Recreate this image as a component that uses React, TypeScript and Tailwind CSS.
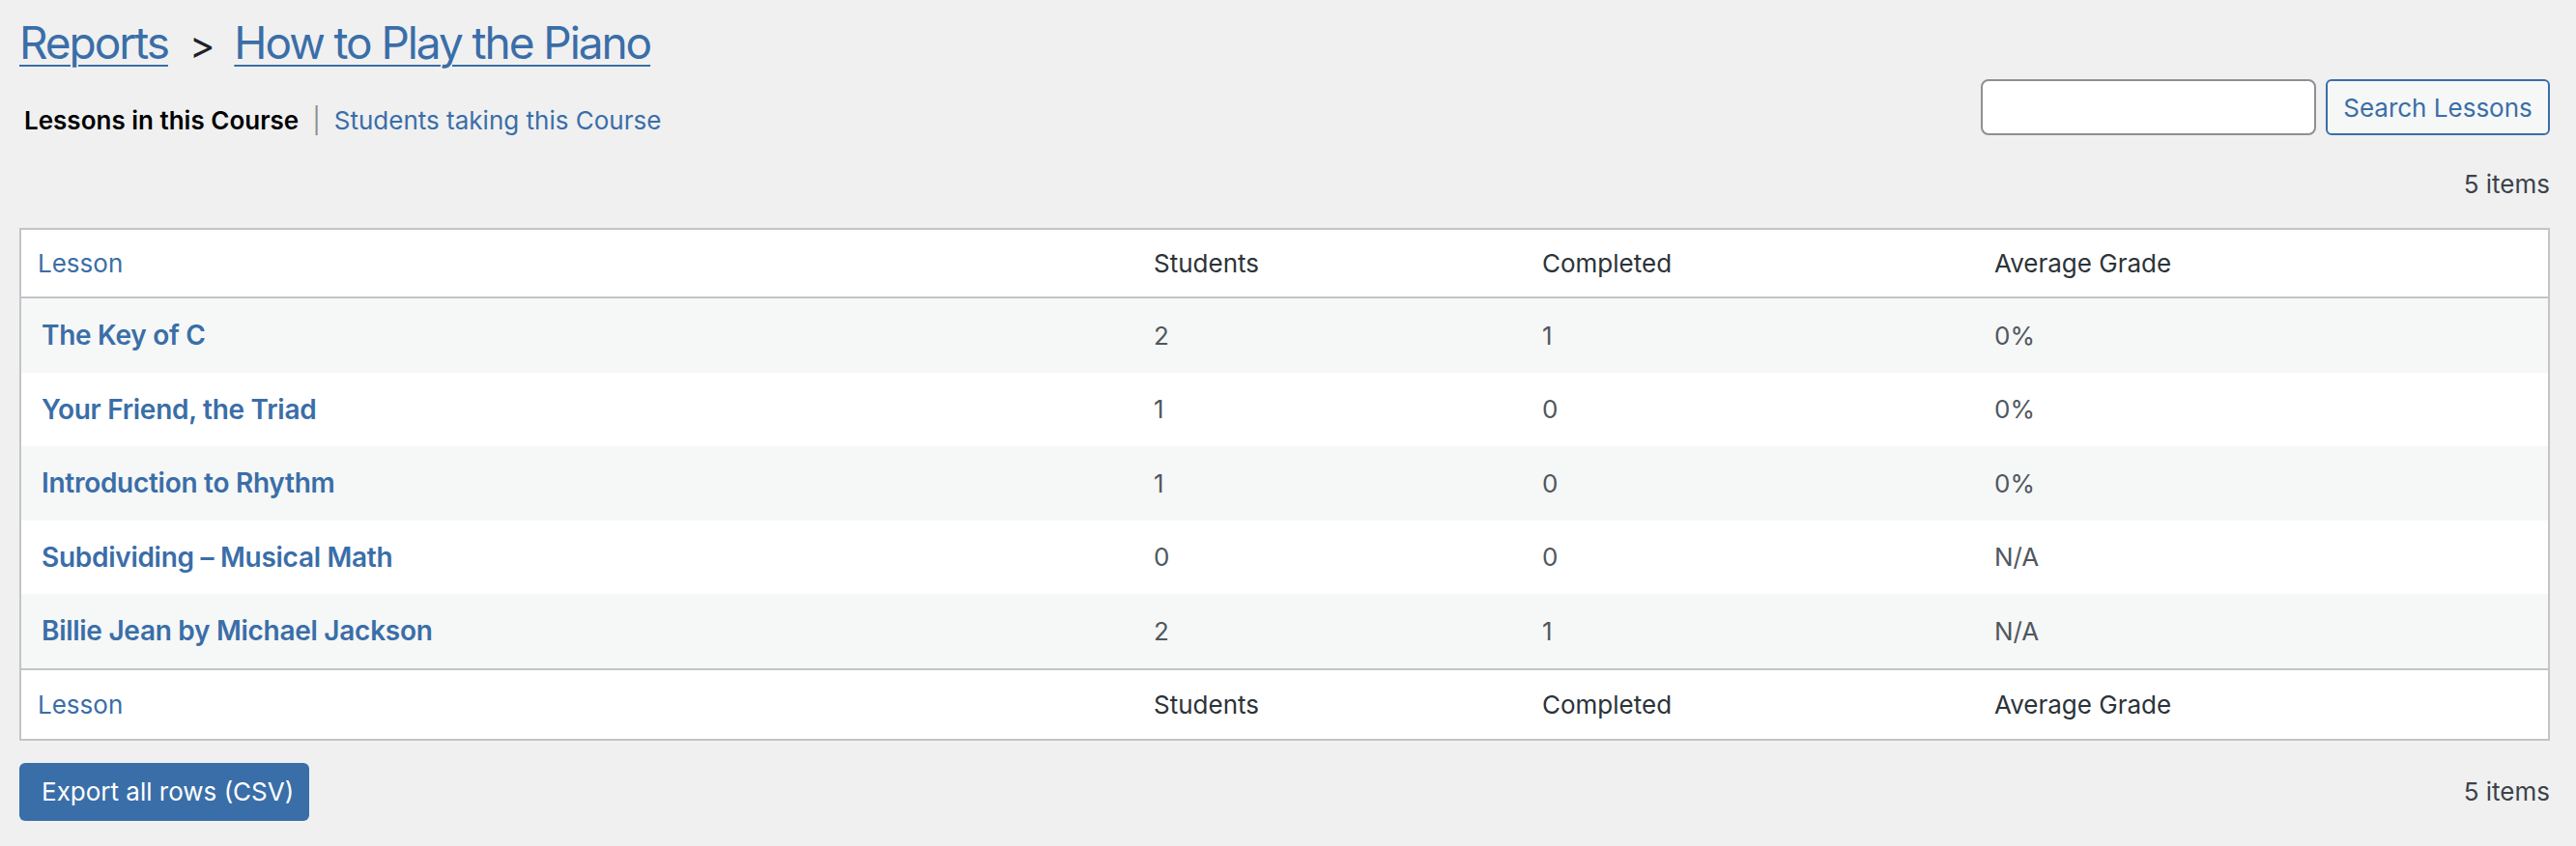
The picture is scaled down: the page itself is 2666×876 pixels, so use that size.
import React from "react";

interface LessonRow {
    title: string;
    students: number;
    completed: number;
    grade: string;
}

const lessons: LessonRow[] = [
    { title: "The Key of C", students: 2, completed: 1, grade: "0%" },
    { title: "Your Friend, the Triad", students: 1, completed: 0, grade: "0%" },
    { title: "Introduction to Rhythm", students: 1, completed: 0, grade: "0%" },
    { title: "Subdividing \u2013 Musical Math", students: 0, completed: 0, grade: "N/A" },
    { title: "Billie Jean by Michael Jackson", students: 2, completed: 1, grade: "N/A" },
];

const cols = "grid grid-cols-[1152px_402px_468px_1fr]";

function HeadRow({ bottom }: { bottom?: boolean }) {
    return (
        <div
            className={`${cols} items-center bg-white text-[26px] text-[#2c3338] ${
                bottom ? "h-[73px] border-t-2 border-[#c3c4c7]" : "h-[71px] border-b-2 border-[#c3c4c7]"
            }`}
        >
            <div className="pl-[17px]">
                <a href="#" className="text-[#3a6ea8]">Lesson</a>
            </div>
            <div className="pl-[20px]">Students</div>
            <div className="pl-[20px]">Completed</div>
            <div className="pl-[20px]">Average Grade</div>
        </div>
    );
}

export default function App() {
    return (
        <div
            className="min-h-screen w-full bg-[#f0f0f1] pl-[20px] pr-[27px] pt-[14px]"
            style={{ fontFamily: "Inter, 'Noto Sans', 'Liberation Sans', sans-serif" }}
        >
            {/* Breadcrumb title */}
            <h1 className="flex items-baseline text-[46px] leading-[60px] font-normal tracking-[-0.045em] text-[#1d2327]">
                <a href="#" className="text-[#3a6ea8] underline decoration-2 underline-offset-[6px]">Reports</a>
                <span className="mx-[22px] text-[40px]">&gt;</span>
                <a href="#" className="text-[#3a6ea8] underline decoration-2 underline-offset-[6px]">How to Play the Piano</a>
            </h1>

            {/* Tabs + search */}
            <div className="mt-[5px] flex items-start justify-between">
                <div className="mt-[23px] flex items-center pl-[5px] text-[26px] leading-[39px]">
                    <span className="font-semibold text-black">Lessons in this Course</span>
                    <span className="mx-[14px] text-[#8c8f94]">|</span>
                    <a href="#" className="text-[#3a6ea8]">Students taking this Course</a>
                </div>
                <div className="flex gap-[10px]">
                    <input
                        type="text"
                        className="h-[58px] w-[347px] rounded-[8px] border-2 border-[#8c8f94] bg-white px-3 text-[26px] outline-none"
                    />
                    <button className="h-[58px] w-[232px] rounded-[6px] border-2 border-[#3a6ea8] bg-[#f6f7f7] text-[26px] text-[#3a6ea8]">
                        Search Lessons
                    </button>
                </div>
            </div>

            <div className="mt-[27px] flex justify-end text-[26px] leading-[39px] text-[#3c434a]">5 items</div>

            {/* Table */}
            <div className="mt-[26px] border-2 border-[#c3c4c7] bg-white">
                <HeadRow />
                {lessons.map((row, i) => (
                    <div
                        key={row.title}
                        className={`${cols} h-[76.5px] items-center text-[26px] text-[#50575e] ${
                            i % 2 === 0 ? "bg-[#f6f7f7]" : "bg-white"
                        }`}
                    >
                        <div className="pl-[21px]">
                            <a href="#" className="text-[28px] font-semibold tracking-[-0.01em] text-[#3a6ea8]">{row.title}</a>
                        </div>
                        <div className="pl-[20px]">{row.students}</div>
                        <div className="pl-[20px]">{row.completed}</div>
                        <div className="pl-[20px]">{row.grade}</div>
                    </div>
                ))}
                <HeadRow bottom />
            </div>

            {/* Bottom bar */}
            <div className="mt-[23px] flex items-center justify-between">
                <button className="h-[60px] w-[300px] rounded-[6px] bg-[#3a6ea8] text-left pl-[23px] text-[26px] text-white">
                    Export all rows (CSV)
                </button>
                <span className="text-[26px] text-[#3c434a]">5 items</span>
            </div>
        </div>
    );
}
